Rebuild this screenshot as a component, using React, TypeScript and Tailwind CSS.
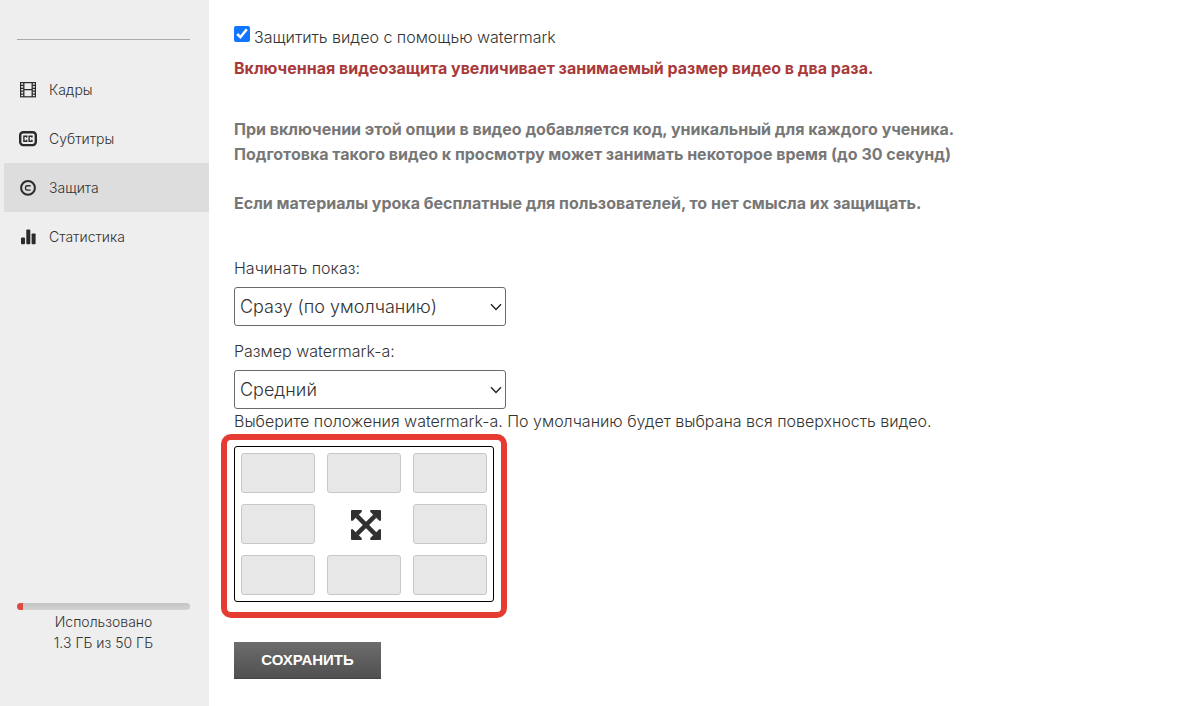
import { useState } from 'react';
import type { ReactNode } from 'react';

const menuItems: { id: string; label: string; icon: ReactNode }[] = [
  { id: 'frames', label: 'Кадры', icon: <FilmIcon /> },
  { id: 'subtitles', label: 'Субтитры', icon: <CaptionsIcon /> },
  { id: 'protection', label: 'Защита', icon: <CopyrightIcon /> },
  { id: 'stats', label: 'Статистика', icon: <StatsIcon /> },
];

const positions = [
  'Сверху слева',
  'Сверху по центру',
  'Сверху справа',
  'Слева',
  'Вся поверхность',
  'Справа',
  'Снизу слева',
  'Снизу по центру',
  'Снизу справа',
];

const storage = { used: 1.3, total: 50 };

function FilmIcon() {
  return (
    <svg viewBox="0 0 16 16" className="h-4 w-4" fill="none" stroke="#2b2b2b" aria-hidden="true">
      <rect x="0.6" y="0.6" width="14.8" height="14.2" strokeWidth="1.2" />
      <path d="M3.8 1v14M12.2 1v14M3.8 7.7h8.4" strokeWidth="1.3" />
      <path d="M0.5 3.4h3M0.5 6.3h3M0.5 9.2h3M0.5 12.1h3M12.5 3.4h3M12.5 6.3h3M12.5 9.2h3M12.5 12.1h3" strokeWidth="1.2" />
    </svg>
  );
}

function CaptionsIcon() {
  return (
    <svg viewBox="0 0 18 16" className="h-4 w-[18px] shrink-0" fill="none" stroke="#2b2b2b" aria-hidden="true">
      <rect x="1.2" y="1.3" width="15.6" height="12.8" rx="3" strokeWidth="2.4" />
      <path d="M8.3 5.2H4.9v5h3.4M13.5 5.2h-3.4v5h3.4" strokeWidth="1.4" />
      <path d="M7.7 4.8v2M7.7 8.6v2M12.9 4.8v2M12.9 8.6v2" strokeWidth="1.1" />
    </svg>
  );
}

function CopyrightIcon() {
  return (
    <svg viewBox="0 0 16 16" className="h-4 w-4" fill="none" stroke="#2b2b2b" aria-hidden="true">
      <circle cx="8" cy="7.9" r="6.9" strokeWidth="2" />
      <path d="M10.6 5.7H7.2q-1.6 0-1.6 1.4v1.6q0 1.4 1.6 1.4h3.4" strokeWidth="1.4" />
    </svg>
  );
}

function StatsIcon() {
  return (
    <svg viewBox="0 0 16 16" className="h-4 w-4" fill="#2b2b2b" aria-hidden="true">
      <rect x="1" y="8.4" width="4" height="6.8" rx="0.9" />
      <rect x="6.3" y="0.6" width="4" height="14.6" rx="0.9" />
      <rect x="11.6" y="4.4" width="4" height="10.8" rx="0.9" />
    </svg>
  );
}

function ExpandIcon() {
  return (
    <svg viewBox="0 0 30 30" className="h-[30px] w-[30px]" fill="#303030" aria-hidden="true">
      <path d="M4.6 7.7 7.7 4.6 25.4 22.3 22.3 25.4Z" />
      <path d="M22.3 4.6 25.4 7.7 7.7 25.4 4.6 22.3Z" />
      <path d="M1 0H10Q11.8 .5 10.6 2L2 10.6Q.5 11.8 0 10V1Q0 0 1 0Z" />
      <path d="M29 0H20Q18.2 .5 19.4 2L28 10.6Q29.5 11.8 30 10V1Q30 0 29 0Z" />
      <path d="M1 30H10Q11.8 29.5 10.6 28L2 19.4Q.5 18.2 0 20V29Q0 30 1 30Z" />
      <path d="M29 30H20Q18.2 29.5 19.4 28L28 19.4Q29.5 18.2 30 20V29Q30 30 29 30Z" />
    </svg>
  );
}

function SelectField({ id, label, options }: { id: string; label: string; options: string[] }) {
  return (
    <div>
      <label htmlFor={id} className="block leading-6">
        {label}
      </label>
      <div className="relative mt-[7px] w-[272px]">
        <select
          id={id}
          className="block h-[39px] w-full appearance-none rounded-[3px] border border-[#6b6b6b] bg-white pr-8 pl-[5px] text-lg text-[#333]">
          {options.map((option) => (
            <option key={option}>{option}</option>
          ))}
        </select>
        <svg
          viewBox="0 0 12 8"
          className="pointer-events-none absolute top-4 right-1 h-2 w-3"
          fill="none"
          stroke="#222"
          strokeWidth="1.4"
          aria-hidden="true">
          <path d="M1 1.2 6 6.4 11 1.2" />
        </svg>
      </div>
    </div>
  );
}

function Sidebar() {
  return (
    <aside className="flex w-[209px] shrink-0 flex-col bg-[#eee] pb-[54px] text-sm">
      <hr className="mr-[19px] ml-[17px] mt-[39px] border-[#aaa]" />
      <nav className="mt-[25px] pl-1">
        {menuItems.map((item) => (
          <a
            key={item.id}
            href={`#${item.id}`}
            className={`flex h-[49px] items-center pl-[15px] ${item.id === 'protection' ? 'bg-[#ddd]' : ''}`}>
            <span className="flex w-[30px] justify-center pr-3">{item.icon}</span>
            {item.label}
          </a>
        ))}
      </nav>
      <div className="mr-[19px] ml-[17px] mt-auto text-center leading-[21px]">
        <div className="mb-px h-[7px] w-full overflow-hidden rounded-full bg-linear-to-b from-[#c4c4c4] to-[#d2d2d2]">
          <div className="h-full w-1.5 bg-[#dc4a44]" style={{ minWidth: `${(storage.used / storage.total) * 100}%` }} />
        </div>
        <p>Использовано</p>
        <p>
          {storage.used} ГБ из {storage.total} ГБ
        </p>
      </div>
    </aside>
  );
}

function PositionPicker() {
  const [selected, setSelected] = useState<string[]>([]);

  const toggle = (name: string) =>
    setSelected((prev) => (prev.includes(name) ? prev.filter((p) => p !== name) : [...prev, name]));

  return (
    <div className="-ml-[13px] w-fit rounded-[10px] border-[6px] border-[#e53b32] px-[7px] pt-[6px] pb-[10px]">
      <div className="grid grid-cols-3 gap-x-3 gap-y-[11px] rounded-[3px] border border-black p-[6px]">
        {positions.map((name) =>
          name === 'Вся поверхность' ? (
            <button
              key={name}
              type="button"
              aria-label={name}
              onClick={() => setSelected([])}
              className="flex items-center justify-center pt-0.5 pl-1">
              <ExpandIcon />
            </button>
          ) : (
            <button
              key={name}
              type="button"
              aria-label={name}
              aria-pressed={selected.includes(name)}
              onClick={() => toggle(name)}
              className={`h-10 w-[74px] rounded-[3px] border border-[#c8c8c8] ${
                selected.includes(name) ? 'bg-[#bbb]' : 'bg-[#e7e7e7]'
              }`}
            />
          ),
        )}
      </div>
    </div>
  );
}

export default function App() {
  return (
    <div className="flex min-h-screen bg-white font-['Inter','Noto_Sans',sans-serif] text-base font-light text-[#333]">
      <Sidebar />
      <main className="min-w-0 flex-1 px-[25px] pt-[25px] pb-7">
        <form onSubmit={(e) => e.preventDefault()}>
          <label className="flex items-start gap-1 leading-6">
            <input type="checkbox" defaultChecked className="mt-px h-4 w-4 accent-[#1075ff]" />
            Защитить видео с помощью watermark
          </label>
          <p className="mt-[7px] leading-6 font-bold text-[#a93a3a]">
            Включенная видеозащита увеличивает занимаемый размер видео в два раза.
          </p>

          <div className="mt-[37px] space-y-6 leading-[25px] font-bold text-[#777]">
            <p>
              При включении этой опции в видео добавляется код, уникальный для каждого ученика.
              <br />
              Подготовка такого видео к просмотру может занимать некоторое время (до 30 секунд)
            </p>
            <p>Если материалы урока бесплатные для пользователей, то нет смысла их защищать.</p>
          </div>

          <div className="mt-10 space-y-[13px]">
            <SelectField id="start" label="Начинать показ:" options={['Сразу (по умолчанию)', 'Через 1 минуту']} />
            <SelectField id="size" label="Размер watermark-а:" options={['Средний', 'Маленький', 'Большой']} />
          </div>
          <p className="mb-px leading-6">
            Выберите положения watermark-а. По умолчанию будет выбрана вся поверхность видео.
          </p>
          <PositionPicker />

          <button
            type="submit"
            className="mt-6 h-[37px] w-[147px] border-b border-[#444] bg-linear-to-b from-[#6d6d6d] to-[#505050] font-['Liberation_Sans',Arial,sans-serif] text-[15px] font-bold text-white">
            СОХРАНИТЬ
          </button>
        </form>
      </main>
    </div>
  );
}
